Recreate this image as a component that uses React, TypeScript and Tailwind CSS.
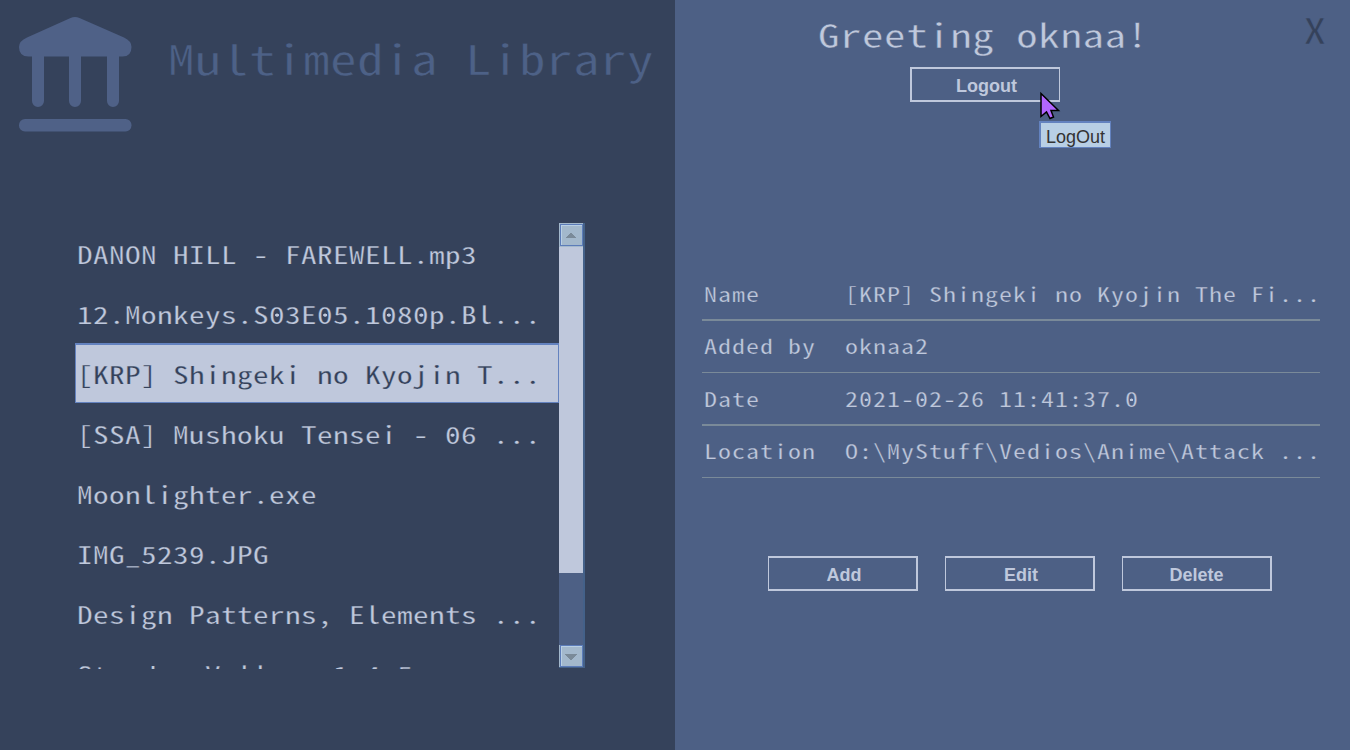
import React from "react";

const files = [
  "DANON HILL - FAREWELL.mp3",
  "12.Monkeys.S03E05.1080p.Bl...",
  "[KRP] Shingeki no Kyojin T...",
  "[SSA] Mushoku Tensei - 06 ...",
  "Moonlighter.exe",
  "IMG_5239.JPG",
  "Design Patterns, Elements ...",
  "Stardew Valley v1.4.5",
];

const details = [
  { label: "Name", value: "[KRP] Shingeki no Kyojin The Fi...", row: "h-[51px] border-b-2 leading-[48px]" },
  { label: "Added by", value: "oknaa2", row: "h-[52px] border-b leading-[50px]" },
  { label: "Date", value: "2021-02-26 11:41:37.0", row: "h-[53px] border-b-2 leading-[52px]" },
  { label: "Location", value: "O:\\MyStuff\\Vedios\\Anime\\Attack ...", row: "h-[52px] border-b leading-[50px]" },
];

// Monospaced text whose zeros carry a centre dot.
function Dotted({ text }: { text: string }) {
  return (
    <>
      {text.split(/(0)/).map((part, i) =>
        part === "0" ? (
          <span key={i} className="bg-[radial-gradient(circle_at_49%_54.6%,currentColor_0.05em,transparent_0.08em)]">0</span>
        ) : (
          part
        ),
      )}
    </>
  );
}

function Logo() {
  return (
    <svg className="ml-[19px] mt-4 h-[116px] w-[113px] shrink-0" viewBox="0 0 113 116" fill="#4f6187">
      <path d="M51.5 2Q56 .2 60.500 2L105 21.500Q112.500 25 112.500 31Q112.500 40.500 103.500 40.500H9.500Q0 40.500 0 31Q0 25 8 21.500Z" />
      <path d="M13 39h12v46a6 6 0 0 1-12 0zM50 39h12v46a6 6 0 0 1-12 0zM88 39h12v46a6 6 0 0 1-12 0z" />
      <rect x="0" y="103" width="112.500" height="12.500" rx="6" />
    </svg>
  );
}

function ScrollButton({ down = false }: { down?: boolean }) {
  return (
    <svg className={down ? "block h-[23px] w-[26px]" : "block h-6 w-[26px]"} viewBox={down ? "0 0 26 23" : "0 0 26 24"} shapeRendering="crispEdges">
      <rect width="26" height="24" fill="#446189" />
      <rect width="24" height={down ? 22 : 24} fill="#a3b8cc" />
      <path d={down ? "M1 0v22H24V0z" : "M1 1v22H24V1z"} fill="#5c7cb9" />
      <rect x="2" y={down ? 1 : 2} width="21" height="20" fill="#b8cfe5" />
      <rect x="3" y={down ? 2 : 3} width="20" height="19" fill="#a3b8cc" />
      <path d={down ? "M6 9h12v1h-1v1h-1v1h-1v1h-1v1h-1v1h-2v-1h-1v-1h-1v-1h-1v-1h-1v-1h-1z" : "M7 15h10v-1h-1v-1h-1v-1h-1v-1h-1v-1h-2v1h-1v1h-1v1h-1v1h-1z"} fill="#7a8a99" />
    </svg>
  );
}

export default function App() {
  return (
    <div className="relative flex h-[750px] w-[1350px] overflow-hidden font-['Noto_Sans_Mono_CJK_SC','Liberation_Mono',monospace]">
      <section className="flex h-full w-[675px] flex-col bg-[#35425b]">
        <header className="flex h-[223px]">
          <Logo />
          <h1 className="ml-[36px] mt-[27px] h-[60px] origin-left scale-x-[1.3] whitespace-pre text-[41px] leading-[60px] tracking-[0.27px] text-[#4d6187] [-webkit-text-stroke:0.5px_#35425b]">Multimedia Library</h1>
        </header>
        <div className="ml-[75px] flex h-[446px] w-[510px]">
          <ul className="h-full w-[484px] overflow-hidden">
            {files.map((file, i) => (
              <li
                key={file}
                className={
                  i === 2
                    ? "h-[60px] border-x border-b border-t-2 border-[#6382bf] bg-[#bfc8dc] pl-[1px] text-[#35425b] [-webkit-text-stroke:0.25px_#bfc8dc]"
                    : "h-[60px] pl-[2px] pt-[2px] text-[#bfc8dc] [-webkit-text-stroke:0.25px_#35425b]"
                }
              >
                <span className="block origin-left scale-x-[1.3] whitespace-pre text-[24px] leading-[58px] tracking-[0.308px]">
                  <Dotted text={file} />
                </span>
              </li>
            ))}
          </ul>
          <div className="flex w-[26px] flex-col">
            <ScrollButton />
            <div className="h-[326px] border-r-2 border-[#446189] bg-[#bfc8dc]" />
            <div className="h-[72px] border-r-2 border-[#446189] bg-[#4d6085]" />
            <ScrollButton down />
          </div>
        </div>
      </section>

      <section className="flex h-full w-[675px] flex-col bg-[#4d6085] text-[#bfc8dc]">
        <header className="flex h-[67px]">
          <h2 className="ml-[143px] mt-[4px] h-[60px] w-[275px] origin-left scale-x-[1.3] whitespace-pre text-[33px] leading-[60px] tracking-[0.45px] [-webkit-text-stroke:0.4px_#4d6085]">Greeting oknaa!</h2>
          <button className="ml-[210px] mt-[9px] h-[40px] w-6 origin-center scale-x-[1.3] text-[35px] leading-[40px] text-[#35425b] [-webkit-text-stroke:0.5px_#4d6085]">X</button>
        </header>
        <button className="ml-[235px] h-[35px] w-[150px] border-y-2 border-l-2 border-r border-[#bfc8dc] pl-[2px] pt-[2px] font-['Liberation_Sans',sans-serif] text-[18px] font-bold leading-[31px]">Logout</button>
        <dl className="ml-[27px] mt-[168px] w-[618px] text-[20px] tracking-[0.77px] [-webkit-text-stroke:0.25px_#4d6085]">
          {details.map((d) => (
            <div key={d.label} className={`flex border-[#7a8a99] ${d.row}`}>
              <dt className="w-[142px] pl-[1.5px]">
                <span className="block origin-left scale-x-[1.3] whitespace-pre">{d.label}</span>
              </dt>
              <dd className="flex-1 pl-[0.5px]">
                <span className="block origin-left scale-x-[1.3] whitespace-pre">
                  <Dotted text={d.value} />
                </span>
              </dd>
            </div>
          ))}
        </dl>
        <div className="ml-[93px] mt-[78px] flex gap-[27px] font-['Liberation_Sans',sans-serif] text-[18px] font-bold leading-[31px]">
          {["Add", "Edit", "Delete"].map((name) => (
            <button key={name} className={name === "Delete" ? "h-[35px] w-[150px] border-y-2 border-l border-r-2 border-[#bfc8dc] pt-[2px]" : "h-[35px] w-[150px] border-y-2 border-l border-r-2 border-[#bfc8dc] pl-[3px] pt-[2px]"}>
              {name}
            </button>
          ))}
        </div>
      </section>

      <div className="absolute left-[1039px] top-[121px] h-[27px] w-[72px] border-b border-l-2 border-r border-t-2 border-[#6382bf] bg-[#b8cfe5] pl-[5px] pt-[2px] font-['Liberation_Sans',sans-serif] text-[18px] leading-[24px] text-[#333333]">LogOut</div>
      <svg className="absolute left-[1038px] top-[90px] h-8 w-6" viewBox="0 0 24 32">
        <path d="M3 3.500V26.500L8.500 22L12 28.500L15.500 27L13 20.500H20.500Z" fill="#b266ff" stroke="#000" strokeWidth="1.500" />
      </svg>
    </div>
  );
}
